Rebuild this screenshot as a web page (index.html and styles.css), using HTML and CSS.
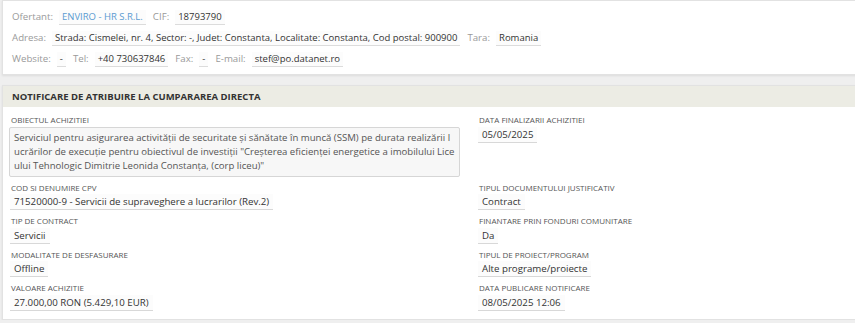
FILE: index.html
```html
<!DOCTYPE html>
<html lang="ro">
<head>
  <meta charset="UTF-8">
  <title>Notificare de atribuire</title>
  <link rel="stylesheet" href="styles.css">
</head>
<body>
  <div class="page">
    <!-- date ofertant -->
    <div class="card supplier">
      <div class="info-row">
        <span class="info-label">Ofertant:</span>
        <span class="info-value link">ENVIRO - HR S.R.L.</span>
        <span class="info-label">CIF:</span>
        <span class="info-value">18793790</span>
      </div>
      <div class="info-row">
        <span class="info-label">Adresa:</span>
        <span class="info-value">Strada: Cismelei, nr. 4, Sector: -, Judet: Constanta, Localitate: Constanta, Cod postal: 900900</span>
        <span class="info-label">Tara:</span>
        <span class="info-value">Romania</span>
      </div>
      <div class="info-row">
        <span class="info-label">Website:</span>
        <span class="info-value">-</span>
        <span class="info-label">Tel:</span>
        <span class="info-value">+40 730637846</span>
        <span class="info-label">Fax:</span>
        <span class="info-value">-</span>
        <span class="info-label">E-mail:</span>
        <span class="info-value">stef@po.datanet.ro</span>
      </div>
    </div>

    <!-- notificare -->
    <div class="card notice">
      <div class="notice-header">NOTIFICARE DE ATRIBUIRE LA CUMPARAREA DIRECTA</div>
      <div class="notice-body">
        <div class="field">
          <div class="field-label">OBIECTUL ACHIZITIEI</div>
          <div class="field-text">Serviciul pentru asigurarea activității de securitate și sănătate în muncă (SSM) pe durata realizării lucrărilor de execuție pentru obiectivul de investiții "Creşterea eficienţei energetice a imobilului Liceului Tehnologic Dimitrie Leonida Constanța, (corp liceu)"</div>
        </div>
        <div class="field">
          <div class="field-label">DATA FINALIZARII ACHIZITIEI</div>
          <span class="field-value">05/05/2025</span>
        </div>

        <div class="field">
          <div class="field-label">COD SI DENUMIRE CPV</div>
          <span class="field-value">71520000-9 - Servicii de supraveghere a lucrarilor (Rev.2)</span>
        </div>
        <div class="field">
          <div class="field-label">TIPUL DOCUMENTULUI JUSTIFICATIV</div>
          <span class="field-value">Contract</span>
        </div>

        <div class="field">
          <div class="field-label">TIP DE CONTRACT</div>
          <span class="field-value">Servicii</span>
        </div>
        <div class="field">
          <div class="field-label">FINANTARE PRIN FONDURI COMUNITARE</div>
          <span class="field-value">Da</span>
        </div>

        <div class="field">
          <div class="field-label">MODALITATE DE DESFASURARE</div>
          <span class="field-value">Offline</span>
        </div>
        <div class="field">
          <div class="field-label">TIPUL DE PROIECT/PROGRAM</div>
          <span class="field-value">Alte programe/proiecte</span>
        </div>

        <div class="field">
          <div class="field-label">VALOARE ACHIZITIE</div>
          <span class="field-value">27.000,00 RON (5.429,10 EUR)</span>
        </div>
        <div class="field">
          <div class="field-label">DATA PUBLICARE NOTIFICARE</div>
          <span class="field-value">08/05/2025 12:06</span>
        </div>
      </div>
    </div>
  </div>
</body>
</html>
```

FILE: styles.css
```css
body {
  margin: 0;
  font-family: "Open Sans", "Noto Sans", sans-serif;
  background: #efefef;
  color: #333;
  overflow: hidden;
}
.page {
  padding: 0 0 0 2px;
  margin-right: -6px;
}
.card {
  background: #fff;
  border: 1px solid #e2e2e2;
  box-shadow: 0 1px 2px rgba(0, 0, 0, 0.08);
}

/* date ofertant */
.supplier {
  padding: 5px 9px 5px;
  height: 63px;
}
.info-row {
  display: flex;
  align-items: baseline;
  height: 21px;
  line-height: 21px;
  font-size: 9.5px;
}
.info-label {
  color: #9a9a9a;
  font-size: 9.7px;
  margin-right: 6px;
}
.info-value {
  line-height: 14px;
  padding: 0 3px;
  border-bottom: 1px solid #dcdcdc;
  background: #fcfcfc;
  margin-right: 7px;
  color: #333;
}
.info-value.link {
  color: #5b9bd1;
}

/* notificare */
.notice {
  margin-top: 10px;
}
.notice-header {
  background: #ecece4;
  height: 21px;
  line-height: 21px;
  padding: 0 9px;
  font-size: 9.5px;
  font-weight: bold;
  color: #333;
}
.notice-body {
  display: grid;
  grid-template-columns: 451px 1fr;
  column-gap: 17px;
  row-gap: 5px;
  padding: 7px 6px 8px;
}
.field {
  display: flex;
  flex-direction: column;
  align-items: flex-start;
}
.field-label {
  font-size: 8px;
  line-height: 11px;
  color: #555;
  margin-bottom: 1.5px;
  padding-left: 2px;
}
.field-value {
  font-size: 9.7px;
  line-height: 15px;
  padding: 0 4px;
  margin-left: 1px;
  border-bottom: 1px solid #d8d8d8;
  background: #fcfcfc;
}
.field-text {
  box-sizing: border-box;
  width: 100%;
  height: 50px;
  padding: 3px 4px;
  font-size: 9.6px;
  line-height: 14px;
  color: #555;
  background: #f7f7f7;
  border: 1px solid #d6d6d6;
  border-radius: 2px;
  word-break: break-all;
}
```
